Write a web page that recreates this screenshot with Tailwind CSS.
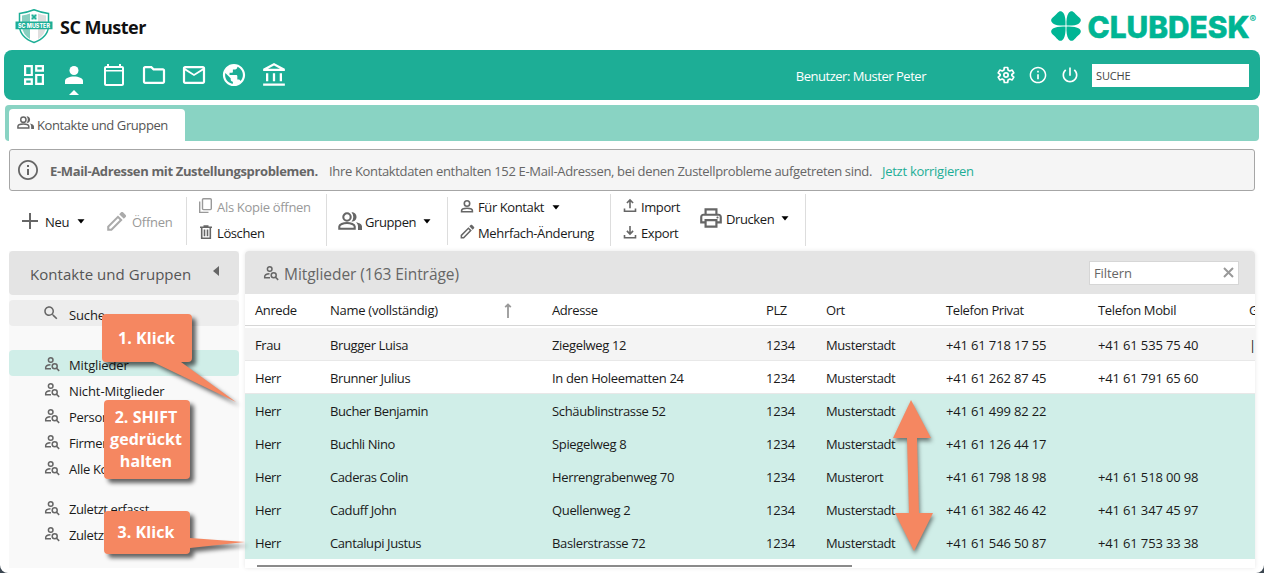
<!DOCTYPE html>
<html lang="de">
<head>
  <meta charset="UTF-8" />
  <title>SC Muster - Kontakte und Gruppen</title>
  <script src="https://cdn.jsdelivr.net/npm/@tailwindcss/browser@4"></script>
</head>
<body class="h-[573px] overflow-hidden bg-[#3b4650] font-['Open_Sans','Noto_Sans',sans-serif] text-[13px] leading-[18px] tracking-[-0.3px] text-[#1a1a1a]">

  <!-- Icon set -->
  <svg class="hidden">
    <symbol id="i-dashboard" viewBox="1.2 1.2 21.6 21.6"><path d="M19 5v2h-4V5h4M9 5v6H5V5h4m10 8v6h-4v-6h4M9 17v2H5v-2h4M21 3h-8v6h8V3zM11 3H3v10h8V3zm10 8h-8v10h8V11zm-10 4H3v6h8v-6z" /></symbol>
    <symbol id="i-user" viewBox="0 0 24 24"><circle cx="12" cy="7.500" r="4.500" /><path d="M3 21v-3c0-2.800 4.500-4.500 9-4.500s9 1.700 9 4.500v3z" /></symbol>
    <symbol id="i-calendar" viewBox="0 0 24 24"><path d="M20 3h-1V1h-2v2H7V1H5v2H4c-1.100 0-2 .9-2 2v16c0 1.100.9 2 2 2h16c1.100 0 2-.9 2-2V5c0-1.100-.9-2-2-2zm0 18H4V8.500h16V21zm0-14H4V5h16v2z" /></symbol>
    <symbol id="i-folder" viewBox="1.2 1.2 21.6 21.6"><path d="M9.170 6l2 2H20v10H4V6h5.170M10 4H4c-1.100 0-1.990.9-1.990 2L2 18c0 1.100.9 2 2 2h16c1.100 0 2-.9 2-2V8c0-1.100-.9-2-2-2h-8l-2-2z" /></symbol>
    <symbol id="i-mail" viewBox="1.2 1.2 21.6 21.6"><path d="M22 6c0-1.100-.9-2-2-2H4c-1.100 0-2 .9-2 2v12c0 1.100.9 2 2 2h16c1.100 0 2-.9 2-2V6zm-2 0l-8 5-8-5h16zm0 12H4V8l8 5 8-5v10z" /></symbol>
    <symbol id="i-globe" viewBox="1.2 1.2 21.6 21.6"><path d="M12 2C6.480 2 2 6.480 2 12s4.480 10 10 10 10-4.480 10-10S17.520 2 12 2zm-1 17.930c-3.950-.49-7-3.850-7-7.930 0-.62.08-1.210.21-1.790L9 15v1c0 1.100.9 2 2 2v1.930zm6.900-2.540c-.26-.81-1-1.390-1.900-1.390h-1v-3c0-.55-.45-1-1-1H8v-2h2c.55 0 1-.45 1-1V7h2c1.100 0 2-.9 2-2v-.41c2.930 1.190 5 4.060 5 7.410 0 2.080-.8 3.970-2.100 5.390z" /></symbol>
    <symbol id="i-bank" viewBox="1 1 21 21"><path d="M6.500 10h-2v7h2v-7zm6 0h-2v7h2v-7zm8.500 9H2v2h19v-2zm-2.500-9h-2v7h2v-7zm-7-6.740L16.710 6H6.290l5.210-2.740m0-2.260L2 6v2h19V6l-9.500-5z" /></symbol>
    <symbol id="i-gear" viewBox="0 0 24 24" fill="none" stroke="currentColor" stroke-width="2" stroke-linejoin="round"><path d="M10 3h4l.5 3 2 1.200 2.900-1.100 2 3.400L19 11.400v1.200l2.400 1.900-2 3.400-2.900-1.100-2 1.200-.5 3h-4l-.5-3-2-1.200-2.900 1.100-2-3.400L5 12.600v-1.200L2.600 9.500l2-3.400 2.900 1.100 2-1.200z" /><circle cx="12" cy="12" r="2.600" /></symbol>
    <symbol id="i-info" viewBox="0 0 24 24"><path d="M11 7h2v2h-2zm0 4h2v6h-2zm1-9C6.480 2 2 6.480 2 12s4.480 10 10 10 10-4.480 10-10S17.520 2 12 2zm0 18.200c-4.500 0-8.200-3.700-8.200-8.200s3.700-8.200 8.200-8.200 8.200 3.700 8.200 8.200-3.700 8.200-8.200 8.200z" /></symbol>
    <symbol id="i-power" viewBox="0 0 24 24"><path d="M13 3h-2v10h2V3zm4.830 2.170l-1.420 1.420C17.990 7.860 19 9.810 19 12c0 3.870-3.130 7-7 7s-7-3.130-7-7c0-2.190 1.010-4.140 2.580-5.420L6.170 5.170C4.230 6.820 3 9.260 3 12c0 4.970 4.030 9 9 9s9-4.030 9-9c0-2.740-1.230-5.180-3.170-6.830z" /></symbol>
    <symbol id="i-group" viewBox="0 0 24 18" fill="none" stroke="currentColor" stroke-width="2.100"><circle cx="9" cy="5" r="3.700" /><path d="M1.300 16.700v-2.200c0-2.200 4-3.500 7.700-3.500s7.700 1.300 7.700 3.500v2.200z" /><path d="M13.500 .3c3 0 5 2 5 4.700S16.500 9.700 13.500 9.700c2.400-2.800 2.400-6.500 0-9.400z" fill="currentColor" stroke="none" /><path d="M18 10.300c3.300.7 6 2 6 4.200V18H20v-3.500c0-1.700-.7-3.100-2-4.200z" fill="currentColor" stroke="none" /></symbol>
    <symbol id="i-person" viewBox="0 0 16 16" fill="none" stroke="currentColor" stroke-width="1.600"><circle cx="8" cy="4.500" r="2.700" /><path d="M2.600 12.700v-1c0-1.700 3-2.500 5.400-2.500s5.400.8 5.400 2.500v1z" /></symbol>
    <symbol id="i-psearch" viewBox="0 0 16 16" fill="none" stroke="currentColor" stroke-width="1.500"><circle cx="6.700" cy="4" r="2.300" /><path d="M7 12.800H1.700v-1.200c0-1.500 2-2.600 4.800-2.800" /><circle cx="10.700" cy="10.300" r="2.500" /><path d="M12.500 12.200l2.700 2.700" /></symbol>
    <symbol id="i-pencil" viewBox="0 0 20 20"><path d="M11.800 4L2 13.800V18h4.200L16 8.200zM3.900 16.100v-1.500l7.900-7.900 1.500 1.500-7.900 7.900zM12.900 2.900l1.700-1.700c.5-.5 1.300-.5 1.800 0l2.400 2.400c.5.5.5 1.300 0 1.800l-1.700 1.700z" /></symbol>
    <symbol id="i-copy" viewBox="0 0 16 16" fill="none" stroke="currentColor" stroke-width="1.400"><rect x="4.500" y=".8" width="8.800" height="10.800" rx="1" /><path d="M1.700 3.600v10.800H10.500" /></symbol>
    <symbol id="i-trash" viewBox="0 0 16 16" fill="none" stroke="currentColor" stroke-width="1.600"><path d="M2 3.200h12M5.500 2h5M3.700 3.500v10.700h8.600V3.500M6.500 5.500v6.700M9.500 5.500v6.700" /></symbol>
    <symbol id="i-up" viewBox="0 0 16 16" fill="none" stroke="currentColor" stroke-width="1.600"><path d="M2.500 10.500v2.700h11v-2.700M8 10.200V2M4.900 5L8 1.900 11.100 5" /></symbol>
    <symbol id="i-down" viewBox="0 0 16 16" fill="none" stroke="currentColor" stroke-width="1.600"><path d="M2.500 11v2.700h11V11M8 2v7.500M4.900 6.900L8 10l3.100-3.100" /></symbol>
    <symbol id="i-print" viewBox="0 0 24 24"><path d="M19 8h-1V3H6v5H5c-1.660 0-3 1.340-3 3v6h4v4h12v-4h4v-6c0-1.660-1.340-3-3-3zM8 5h8v3H8V5zm8 12v2H8v-4h8v2zm2-2v-2H6v2H4v-4c0-.55.45-1 1-1h14c.55 0 1 .45 1 1v4h-2z" /><circle cx="18" cy="11.500" r="1" /></symbol>
    <symbol id="i-search" viewBox="0 0 24 24"><path d="M15.500 14h-.79l-.28-.27C15.410 12.590 16 11.110 16 9.500 16 5.910 13.090 3 9.500 3S3 5.910 3 9.500 5.910 16 9.500 16c1.610 0 3.090-.59 4.230-1.570l.27.28v.79l5 4.990L20.490 19l-4.990-5zm-6 0C7.010 14 5 11.990 5 9.500S7.010 5 9.500 5 14 7.010 14 9.500 11.990 14 9.500 14z" /></symbol>
    <symbol id="i-caret" viewBox="0 0 8 5"><path d="M.5 .2h7L4 4.500z" /></symbol>
  </svg>

  <div class="relative h-[573px] overflow-hidden rounded-b-[8px] bg-white">

    <!-- Header -->
    <header class="flex h-[50px] items-start justify-between pl-[15px] pr-[6px]">
      <div class="flex">
        <svg class="mt-[8px] h-[36px] w-[38px]" viewBox="0 0 38 36">
          <path d="M19 1.800Q26 4.600 33.500 5.500V18Q33 29.500 19 34.500Q5 29.500 4.500 18V5.500Q12 4.600 19 1.800z" fill="#fff" stroke="#1dae96" stroke-width="1.500" />
          <path d="M7 7.500Q11 7.200 15 5.500V31Q7.500 26.500 7 18z" fill="#88cfc0" />
          <path d="M23 5.500Q27 7.200 31 7.500V18Q30.500 26.500 23 31z" fill="#dedede" />
          <path d="M16.500 6.500h2v1h1v-1h2v2h-1v1h1v2h-2v-1h-1v1h-2v-2h1v-1h-1z" fill="#1dae96" />
          <path d="M.5 13.500h37v7.800H.5z" fill="#1dae96" />
          <text x="19" y="19.700" text-anchor="middle" textLength="32" lengthAdjust="spacingAndGlyphs" font-family="Inter" font-size="6" font-weight="800" letter-spacing="0" fill="#fff">SC MUSTER</text>
        </svg>
        <h1 class="ml-[7px] mt-[15px] text-[18px] font-bold leading-[24px] tracking-[-0.5px] text-[#111]">SC Muster</h1>
      </div>
      <svg class="mt-[10px] h-[34px] w-[208px]" viewBox="0 0 208 34" fill="#00b594">
        <path id="leaf" d="M15.500 15.500C15.800 10.500 15.200 5.500 13.400 3C11.500 .4 9.300 .8 7.600 2.700C6.300 4.200 4.200 6.300 2.700 7.600C.8 9.300 .4 11.500 3 13.400C5.500 15.200 10.500 15.800 15.500 15.500z" />
        <use href="#leaf" transform="matrix(-1 0 0 1 32 0)" />
        <use href="#leaf" transform="matrix(1 0 0 -1 0 32)" />
        <use href="#leaf" transform="matrix(-1 0 0 -1 32 32)" />
        <text x="37.500" y="27.500" textLength="162" lengthAdjust="spacingAndGlyphs" font-family="Inter" font-size="29.500" font-weight="800" letter-spacing="0" stroke="#00b594" stroke-width=".5">CLUBDESK</text>
        <text x="199.500" y="13" font-family="Inter" font-size="10" font-weight="600" letter-spacing="0">®</text>
      </svg>
    </header>

    <!-- Main navigation -->
    <nav class="mx-[4px] flex h-[50px] items-center rounded-[8px] bg-[#1dae96] pl-[18px] pr-[11px] text-white">
      <div class="flex gap-[16px]">
        <svg class="size-[24px] fill-current"><use href="#i-dashboard" /></svg>
        <div class="relative">
          <svg class="size-[24px] fill-current"><use href="#i-user" /></svg>
          <div class="absolute left-[7px] top-[27px] border-x-[5px] border-b-[5px] border-x-transparent border-b-white"></div>
        </div>
        <svg class="size-[24px] fill-current"><use href="#i-calendar" /></svg>
        <svg class="size-[24px] fill-current"><use href="#i-folder" /></svg>
        <svg class="size-[24px] fill-current"><use href="#i-mail" /></svg>
        <svg class="size-[24px] fill-current"><use href="#i-globe" /></svg>
        <svg class="size-[24px] fill-current"><use href="#i-bank" /></svg>
      </div>
      <span class="ml-auto mr-[70px] mt-[2px] tracking-[-0.47px]">Benutzer: Muster Peter</span>
      <div class="mr-[12px] flex gap-[12px]">
        <svg class="size-[20px]"><use href="#i-gear" /></svg>
        <svg class="size-[20px] fill-current"><use href="#i-info" /></svg>
        <svg class="size-[20px] fill-current"><use href="#i-power" /></svg>
      </div>
      <div class="h-[23px] w-[157px] bg-white pl-[4px] text-[11px] leading-[24px] tracking-[-0.15px] text-[#444]">SUCHE</div>
    </nav>

    <!-- Tabs -->
    <div class="mx-[5px] mt-[5px] flex h-[36px] rounded-[4px] bg-[#89d3c3] pl-[4px] pt-[4px]">
      <div class="flex w-[176px] rounded-t-[4px] bg-white pl-[8px] pt-[7px] text-[#555]">
        <svg class="mr-[3px] h-[13px] w-[17px] text-[#666]"><use href="#i-group" /></svg>
        <span class="tracking-[-0.4px]">Kontakte und Gruppen</span>
      </div>
    </div>

    <!-- Delivery warning -->
    <div class="mx-[9px] mt-[8px] flex h-[42px] items-center rounded-[3px] border border-[#a6a6a6] bg-[#f5f5f5] pl-[6px] text-[#666]">
      <svg class="mr-[10px] size-[24px] fill-current"><use href="#i-info" /></svg>
      <b class="mt-[2px] w-[279px] tracking-[-0.35px]">E-Mail-Adressen mit Zustellungsproblemen.</b>
      <span class="mt-[2px] w-[553px] whitespace-nowrap tracking-[-0.34px]">Ihre Kontaktdaten enthalten 152 E-Mail-Adressen, bei denen Zustellprobleme aufgetreten sind.</span>
      <a class="mt-[2px] tracking-[-0.27px] text-[#1dae96]">Jetzt korrigieren</a>
    </div>

    <!-- Toolbar -->
    <div class="flex h-[60px] pl-[20px]">
      <div class="mt-[6px] flex h-[48px] w-[167px] items-center border-r border-[#ddd] pt-[1px]">
        <svg class="mb-[2px] h-[16px] w-[19px]" viewBox="0 0 19 16" stroke="#666" stroke-width="2"><path d="M10 0v16M2 8h16" /></svg>
        <span class="ml-[6px] w-[32px]">Neu</span>
        <svg class="h-[5px] w-[8px]"><use href="#i-caret" /></svg>
        <svg class="ml-[20px] size-[22px] fill-[#aaa]"><use href="#i-pencil" /></svg>
        <span class="ml-[5px] text-[#999]">Öffnen</span>
      </div>
      <div class="mt-[3px] flex h-[52px] w-[140px] flex-col gap-[8px] border-r border-[#ddd] pl-[11px] pt-[4px]">
        <div class="flex gap-[3px] text-[#999]"><svg class="size-[16px]"><use href="#i-copy" /></svg><span>Als Kopie öffnen</span></div>
        <div class="flex gap-[3px]"><svg class="size-[16px] text-[#666]"><use href="#i-trash" /></svg><span class="tracking-[-0.4px]">Löschen</span></div>
      </div>
      <div class="mt-[6px] flex h-[48px] w-[121px] items-center border-r border-[#ddd] pl-[11px] pt-[1px]">
        <svg class="mb-[2px] h-[18px] w-[24px] text-[#666]"><use href="#i-group" /></svg>
        <span class="ml-[3px] w-[58px] tracking-[-0.4px]">Gruppen</span>
        <svg class="h-[5px] w-[8px]"><use href="#i-caret" /></svg>
      </div>
      <div class="mt-[3px] flex h-[52px] w-[163px] flex-col gap-[8px] border-r border-[#ddd] pl-[11px] pt-[4px]">
        <div class="flex items-center gap-[3px]"><svg class="size-[16px] text-[#666]"><use href="#i-person" /></svg><span class="w-[71px] tracking-[-0.4px]">Für Kontakt</span><svg class="h-[5px] w-[8px]"><use href="#i-caret" /></svg></div>
        <div class="flex gap-[3px]"><svg class="size-[16px] fill-[#666]"><use href="#i-pencil" /></svg><span class="tracking-[-0.35px]">Mehrfach-Änderung</span></div>
      </div>
      <div class="mt-[3px] flex h-[52px] w-[195px] border-r border-[#ddd] pl-[11px] pt-[4px]">
        <div class="flex w-[76px] flex-col gap-[8px]">
          <div class="flex gap-[3px]"><svg class="size-[16px] text-[#666]"><use href="#i-up" /></svg><span class="tracking-[-0.4px]">Import</span></div>
          <div class="flex gap-[3px]"><svg class="size-[16px] text-[#666]"><use href="#i-down" /></svg><span class="tracking-[-0.4px]">Export</span></div>
        </div>
        <div class="flex h-[41px] items-center">
          <svg class="mb-[2px] size-[26px] fill-[#666]"><use href="#i-print" /></svg>
          <span class="ml-[2px] w-[55px] tracking-[-0.4px]">Drucken</span>
          <svg class="h-[5px] w-[8px]"><use href="#i-caret" /></svg>
        </div>
      </div>
    </div>

    <div class="flex gap-[6px] px-[9px]">

      <!-- Sidebar -->
      <aside class="h-[317px] w-[230px] bg-[#f9f9f9] tracking-[-0.15px]">
        <div class="flex h-[44px] items-center rounded-[4px] bg-[#e4e4e4] pl-[21px] text-[15px] text-[#555]">
          <span class="mt-[2px] w-[183px] tracking-[0.05px]">Kontakte und Gruppen</span>
          <svg class="mb-[5px] h-[10px] w-[6px] fill-[#666]" viewBox="0 0 6 10"><path d="M6 0v10L0 5z" /></svg>
        </div>
        <ul>
          <li class="mt-[5px] flex h-[26px] items-center rounded-[4px] bg-[#ededed] pl-[33px]"><svg class="size-[18px] fill-[#666]"><use href="#i-search" /></svg><span class="ml-[9px] mt-[4px]">Suche</span></li>
          <li class="mt-[24px] flex h-[26px] items-center rounded-[4px] bg-[#d0eee8] pl-[35px]"><svg class="mt-[2px] size-[16px] text-[#666]"><use href="#i-psearch" /></svg><span class="ml-[9px] mt-[4px]">Mitglieder</span></li>
          <li class="flex h-[26px] items-center pl-[35px]"><svg class="mt-[2px] size-[16px] text-[#666]"><use href="#i-psearch" /></svg><span class="ml-[9px] mt-[4px] tracking-[-0.1px]">Nicht-Mitglieder</span></li>
          <li class="flex h-[26px] items-center pl-[35px]"><svg class="mt-[2px] size-[16px] text-[#666]"><use href="#i-psearch" /></svg><span class="ml-[9px] mt-[4px] tracking-[-0.3px]">Personen</span></li>
          <li class="flex h-[26px] items-center pl-[35px]"><svg class="mt-[2px] size-[16px] text-[#666]"><use href="#i-psearch" /></svg><span class="ml-[9px] mt-[4px] tracking-[-0.3px]">Firmen</span></li>
          <li class="flex h-[26px] items-center pl-[35px]"><svg class="mt-[2px] size-[16px] text-[#666]"><use href="#i-psearch" /></svg><span class="ml-[9px] mt-[4px] tracking-[-0.3px]">Alle Kontakte</span></li>
          <li class="mt-[14px] flex h-[26px] items-center pl-[35px]"><svg class="mt-[2px] size-[16px] text-[#666]"><use href="#i-psearch" /></svg><span class="ml-[9px] mt-[4px] tracking-[-0.4px]">Zuletzt erfasst</span></li>
          <li class="flex h-[26px] items-center pl-[35px]"><svg class="mt-[2px] size-[16px] text-[#666]"><use href="#i-psearch" /></svg><span class="ml-[9px] mt-[4px] tracking-[-0.4px]">Zuletzt</span></li>
        </ul>
      </aside>

      <!-- Member list -->
      <main class="w-[1010px] overflow-hidden rounded-t-[4px] shadow-[0_0_4px_rgba(0,0,0,0.1)]">
        <div class="flex h-[43px] items-center bg-[#e4e4e4] pl-[18px] pr-[16px] text-[#666]">
          <svg class="size-[16px]"><use href="#i-psearch" /></svg>
          <h2 class="ml-[5px] mt-[2px] text-[15.5px] tracking-[-0.05px]">Mitglieder (163 Einträge)</h2>
          <div class="ml-auto flex h-[24px] w-[150px] items-center justify-between border border-[#d6d6d6] bg-white pl-[4px] pr-[4px]">
            <span class="tracking-[-0.1px]">Filtern</span>
            <svg class="size-[11px]" viewBox="0 0 11 11" stroke="#999" stroke-width="2"><path d="M1 1l9 9M10 1l-9 9" /></svg>
          </div>
        </div>
        <table class="w-[1040px] table-fixed text-left tracking-[-0.4px]">
          <colgroup>
            <col class="w-[85px]" /><col class="w-[222px]" /><col class="w-[214px]" /><col class="w-[60px]" />
            <col class="w-[120px]" /><col class="w-[152px]" /><col class="w-[151px]" /><col class="w-[36px]" />
          </colgroup>
          <thead>
            <tr class="h-[32px] shadow-[inset_0_-1px_0_#d6d6d6]">
              <th class="pl-[10px] font-normal">Anrede</th>
              <th class="font-normal">
                <div class="flex items-center justify-between pr-[40px]">
                  <span class="tracking-[-0.27px]">Name (vollständig)</span>
                  <svg class="h-[15px] w-[8px]" viewBox="0 0 8 15" stroke="#999" stroke-width="1.800" fill="none"><path d="M4 15V1.500M1.200 4.200l2.800-2.800 2.800 2.800" /></svg>
                </div>
              </th>
              <th class="font-normal">Adresse</th>
              <th class="font-normal">PLZ</th>
              <th class="font-normal">Ort</th>
              <th class="font-normal">Telefon Privat</th>
              <th class="font-normal tracking-[-0.35px]">Telefon Mobil</th>
              <th class="font-normal">Geburtsdatum</th>
            </tr>
            <tr class="h-[2px]"></tr>
          </thead>
          <tbody id="memberRows">
            <!-- Filled below -->
          </tbody>
        </table>
        <div class="ml-[12px] mt-[6px] h-[2px] w-[595px] bg-[#8a8a8a]"></div>
      </main>
    </div>

    <!-- Tutorial callouts -->
    <svg class="absolute left-0 top-0 h-[573px] w-[1264px] drop-shadow-[4px_4px_2px_rgba(0,0,0,0.6)]" viewBox="0 0 1264 573" fill="#f58761">
      <path d="M106 314h82a4 4 0 0 1 4 4v40a4 4 0 0 1-4 4h-7L236 402L153 362h-47a4 4 0 0 1-4-4v-40a4 4 0 0 1 4-4z" />
      <path d="M108 400h78a4 4 0 0 1 4 4v71a4 4 0 0 1-4 4h-78a4 4 0 0 1-4-4v-71a4 4 0 0 1 4-4z" />
      <path d="M108 511h78a4 4 0 0 1 4 4v23L245 542L190 548v2a4 4 0 0 1-4 4h-78a4 4 0 0 1-4-4v-35a4 4 0 0 1 4-4z" />
    </svg>
    <svg class="absolute left-0 top-0 h-[573px] w-[1264px] drop-shadow-[1px_3px_2px_rgba(0,0,0,0.5)]" viewBox="0 0 1264 573" fill="#f58761">
      <path d="M911 400L931 438H917L919 513H933L914 551L895 513H909L907 438H893z" />
    </svg>
    <div class="absolute left-[102px] top-[314px] w-[89px] text-center text-[16px] font-bold leading-[48px] tracking-[0.1px] text-white">1. Klick</div>
    <div class="absolute left-[103px] top-[406px] w-[86px] text-center text-[16px] font-bold leading-[22px] tracking-[0.05px] text-white">2. SHIFT gedrückt halten</div>
    <div class="absolute left-[103px] top-[511px] w-[86px] text-center text-[16px] font-bold leading-[42px] tracking-[0.1px] text-white">3. Klick</div>
  </div>

  <script>
    const members = [
      ["Frau", "Brugger Luisa", "Ziegelweg 12", "1234", "Musterstadt", "+41 61 718 17 55", "+41 61 535 75 40", "|"],
      ["Herr", "Brunner Julius", "In den Holeematten 24", "1234", "Musterstadt", "+41 61 262 87 45", "+41 61 791 65 60", ""],
      ["Herr", "Bucher Benjamin", "Schäublinstrasse 52", "1234", "Musterstadt", "+41 61 499 82 22", "", ""],
      ["Herr", "Buchli Nino", "Spiegelweg 8", "1234", "Musterstadt", "+41 61 126 44 17", "", ""],
      ["Herr", "Caderas Colin", "Herrengrabenweg 70", "1234", "Musterort", "+41 61 798 18 98", "+41 61 518 00 98", ""],
      ["Herr", "Caduff John", "Quellenweg 2", "1234", "Musterstadt", "+41 61 382 46 42", "+41 61 347 45 97", ""],
      ["Herr", "Cantalupi Justus", "Baslerstrasse 72", "1234", "Musterstadt", "+41 61 546 50 87", "+41 61 753 33 38", ""]
    ];
    const rowStyles = ["bg-[#f4f4f4] shadow-[inset_0_-1px_0_#e8e8e8]", "bg-white shadow-[inset_0_-1px_0_#e8e8e8]"];
    const cellStyles = ["pl-[10px]", "", "tracking-[-0.35px]", "tracking-[-0.2px]", "", "tracking-[-0.15px]", "tracking-[-0.15px]", ""];
    const tbody = document.getElementById("memberRows");

    members.forEach((member, i) => {
      tbody.innerHTML += `
        <tr class="h-[33px] ${rowStyles[i] || 'bg-[#d0eee8]'}">
          ${member.map((value, col) => `<td class="${cellStyles[col]}">${value}</td>`).join("")}
        </tr>
      `;
    });
  </script>
</body>
</html>
